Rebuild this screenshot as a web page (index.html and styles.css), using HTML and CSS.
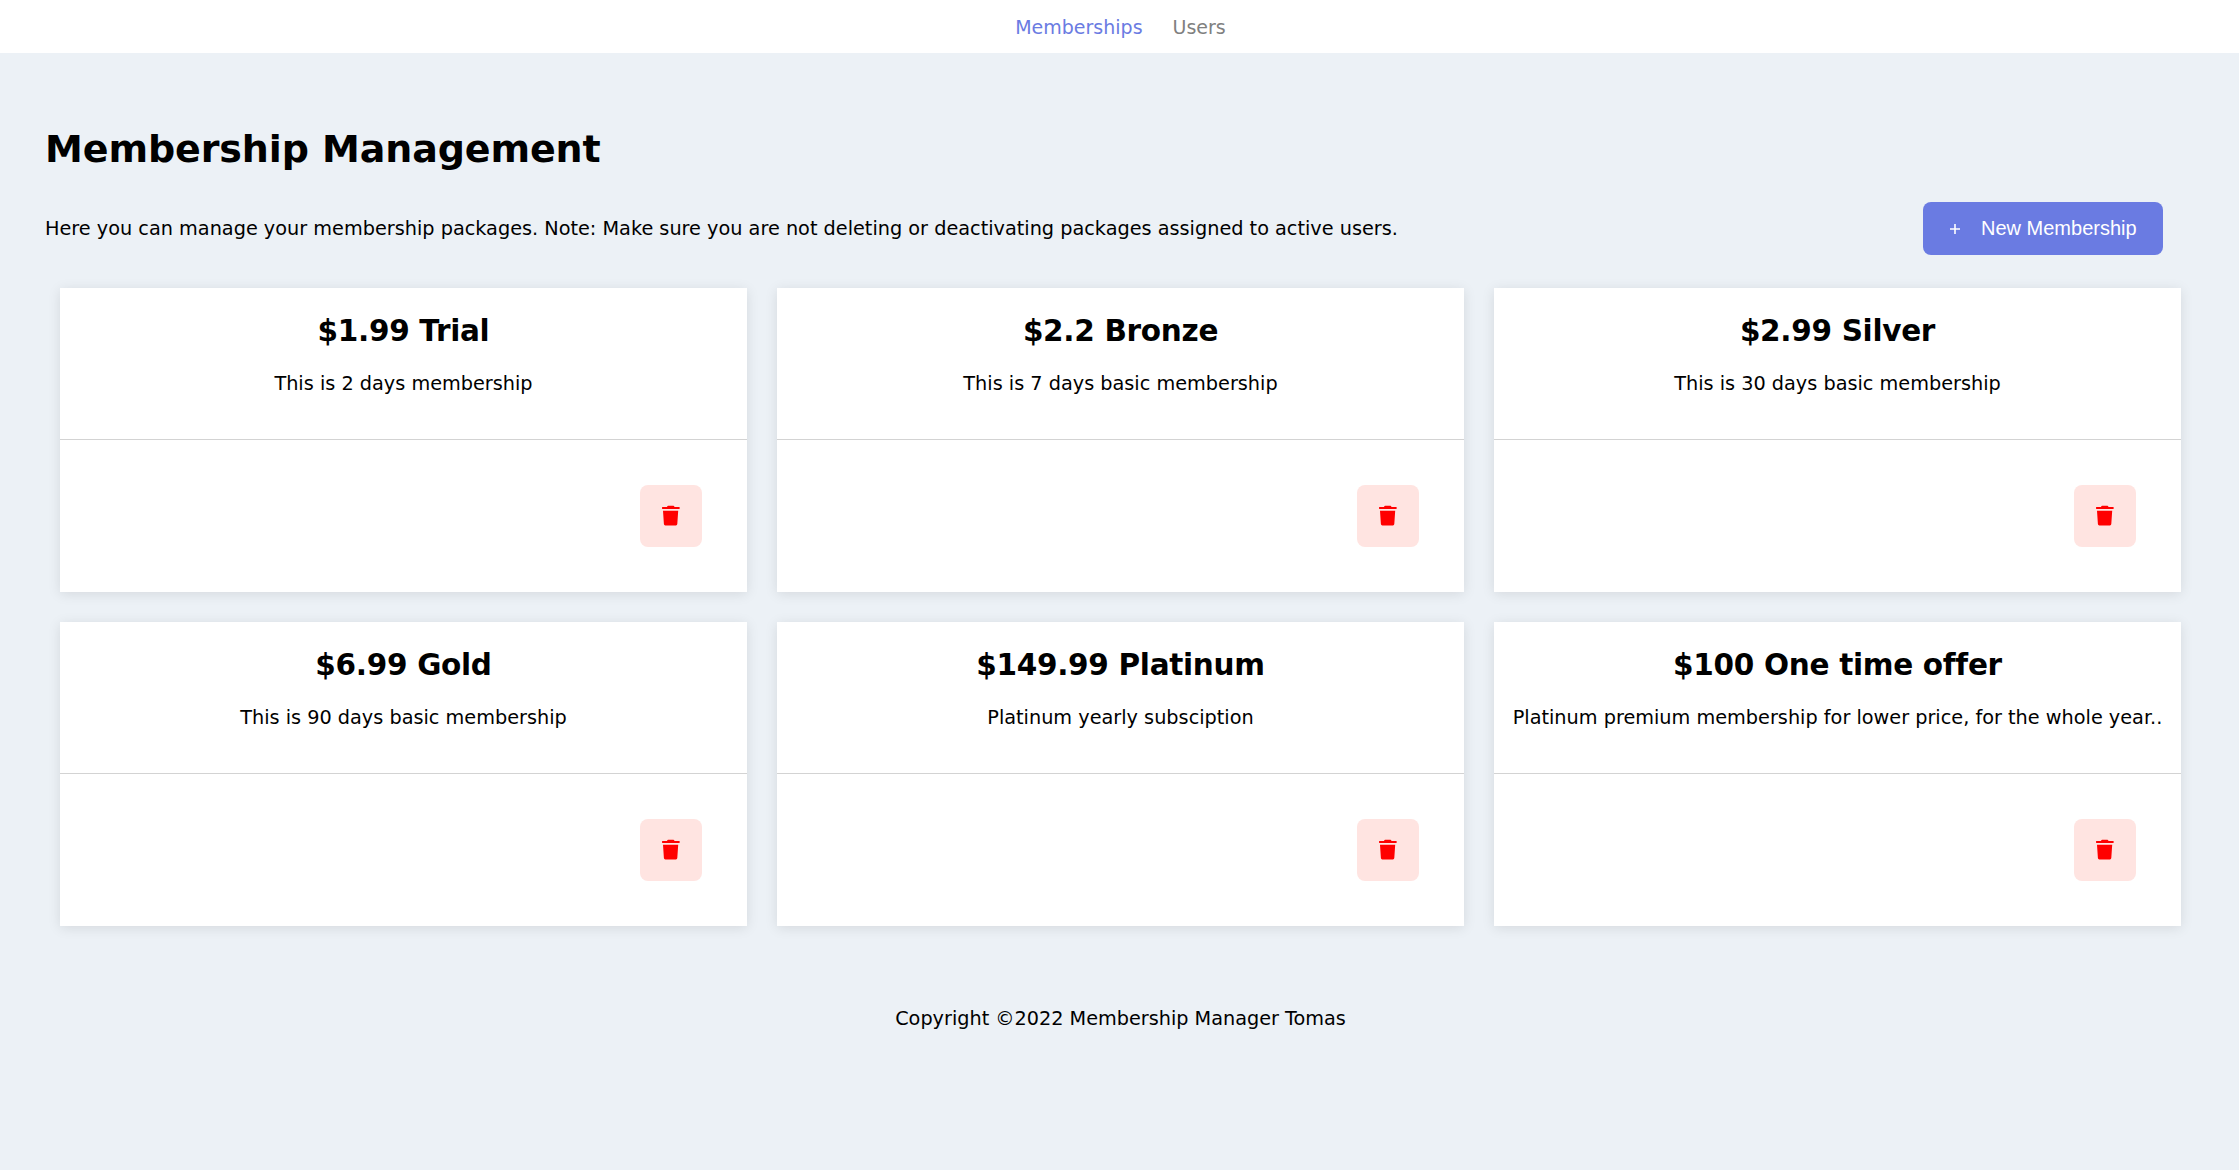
FILE: index.html
```html
<!DOCTYPE html>
<html lang="en">
<head>
<meta charset="utf-8">
<title>Membership Management</title>
<link rel="stylesheet" href="styles.css">
</head>
<body>
<svg class="sprite" aria-hidden="true">
  <symbol id="trash" viewBox="0 0 18 22">
    <path d="M5 2Q5.300.800 6.300.800h4.900q1 0 1.300 1.200H17.600v1.900H.1V2zM1 5.800h15.200L15.300 19q-.1 1.400-1.400 1.400H3.300Q2 20.400 1.900 19z"/>
  </symbol>
</svg>
<nav class="navbar">
  <a class="nav-link active">Memberships</a>
  <a class="nav-link users">Users</a>
</nav>
<main class="page">
  <h1 class="page-title">Membership Management</h1>
  <div class="toolbar">
    <p class="intro">Here you can manage your membership packages. Note: Make sure you are not deleting or deactivating packages assigned to active users.</p>
    <button class="new-button"><svg class="plus" viewBox="0 0 10 10"><path d="M5 0v10M0 5h10"/></svg><span>New Membership</span></button>
  </div>
  <section class="cards">
    <article class="card">
      <div class="card-info"><h2 class="card-title">$1.99 Trial</h2><p class="card-text">This is 2 days membership</p></div>
      <div class="card-actions"><button class="delete-button" aria-label="Delete"><svg class="trash"><use href="#trash"/></svg></button></div>
    </article>
    <article class="card">
      <div class="card-info"><h2 class="card-title">$2.2 Bronze</h2><p class="card-text">This is 7 days basic membership</p></div>
      <div class="card-actions"><button class="delete-button" aria-label="Delete"><svg class="trash"><use href="#trash"/></svg></button></div>
    </article>
    <article class="card">
      <div class="card-info"><h2 class="card-title">$2.99 Silver</h2><p class="card-text">This is 30 days basic membership</p></div>
      <div class="card-actions"><button class="delete-button" aria-label="Delete"><svg class="trash"><use href="#trash"/></svg></button></div>
    </article>
    <article class="card">
      <div class="card-info"><h2 class="card-title">$6.99 Gold</h2><p class="card-text">This is 90 days basic membership</p></div>
      <div class="card-actions"><button class="delete-button" aria-label="Delete"><svg class="trash"><use href="#trash"/></svg></button></div>
    </article>
    <article class="card">
      <div class="card-info"><h2 class="card-title">$149.99 Platinum</h2><p class="card-text">Platinum yearly subsciption</p></div>
      <div class="card-actions"><button class="delete-button" aria-label="Delete"><svg class="trash"><use href="#trash"/></svg></button></div>
    </article>
    <article class="card">
      <div class="card-info"><h2 class="card-title">$100 One time offer</h2><p class="card-text">Platinum premium membership for lower price, for the whole year..</p></div>
      <div class="card-actions"><button class="delete-button" aria-label="Delete"><svg class="trash"><use href="#trash"/></svg></button></div>
    </article>
  </section>
</main>
<footer class="footer">Copyright ©2022 Membership Manager Tomas</footer>
</body>
</html>
```
FILE: styles.css
```css
* { box-sizing: border-box; }

body {
  margin: 0;
  min-height: 100vh;
  background: #ecf1f6;
  color: #000;
  font: 19.28px/24px Verdana, "DejaVu Sans", sans-serif;
}

h1, h2, p { margin: 0; }

.sprite { display: none; }

.navbar {
  display: flex;
  justify-content: center;
  gap: 30px;
  height: 53px;
  padding: 15px 0 0 2px;
  background: #fff;
}

.nav-link { color: #808080; font-size: 19px; }
.nav-link.active { color: #6a7be2; }

.page { padding: 71px 45px 0; }

.page-title {
  font-size: 38px;
  line-height: 50px;
  letter-spacing: -0.1px;
}

.toolbar {
  display: flex;
  justify-content: space-between;
  align-items: center;
  height: 53px;
  margin-top: 28px;
  padding-right: 31px;
}

.intro { white-space: nowrap; }

.new-button {
  display: flex;
  align-items: center;
  gap: 21px;
  width: 240px;
  height: 53px;
  padding: 0 0 0 27px;
  border: 0;
  border-radius: 8px;
  background: #6a7be2;
  color: #fff;
  font: 20px "Liberation Sans", Arial, sans-serif;
  white-space: nowrap;
}

.plus {
  width: 10px;
  height: 10px;
  stroke: #fff;
  stroke-width: 1.6;
}

.cards {
  display: grid;
  grid-template-columns: repeat(3, 687px);
  gap: 30px;
  padding: 33px 0 0 15px;
}

.card {
  height: 304px;
  background: #fff;
  box-shadow: 0 2px 12px rgba(0, 0, 0, 0.1);
}

.card-info {
  height: 152px;
  padding-top: 25px;
  border-bottom: 1px solid #d3d3d3;
  text-align: center;
  white-space: nowrap;
}

.card-title {
  font-size: 29.5px;
  line-height: 36px;
  letter-spacing: -0.3px;
}

.card-text { margin-top: 23px; }

.card-actions {
  display: flex;
  justify-content: flex-end;
  padding: 45px 45px 0 0;
}

.delete-button {
  display: flex;
  align-items: center;
  justify-content: center;
  width: 62px;
  height: 62px;
  padding: 0;
  border: 0;
  border-radius: 8px;
  background: #ffe4e1;
}

.trash {
  width: 18px;
  height: 22px;
  fill: #f00;
}

.footer {
  padding: 81px 0 0 2px;
  font-size: 19.24px;
  text-align: center;
}
```
